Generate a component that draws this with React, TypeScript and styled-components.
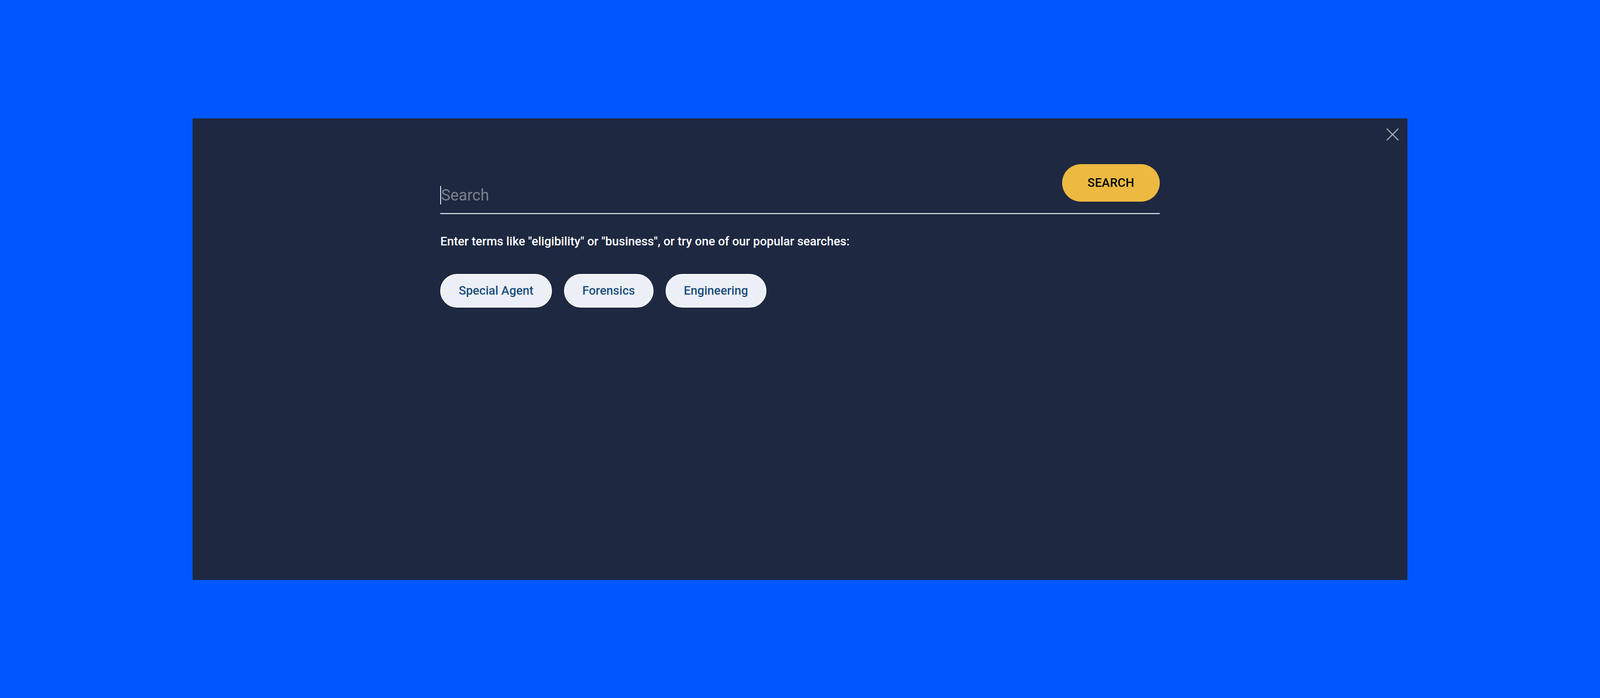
import * as React from "react";
import styled, { createGlobalStyle } from "styled-components";

const GlobalStyle = createGlobalStyle`
  html, body {
    margin: 0;
    padding: 0;
    background: #0057ff;
    font-family: Roboto, "Liberation Sans", Arial, sans-serif;
  }
  * { box-sizing: border-box; }
`;

const popularSearches = ["Special Agent", "Forensics", "Engineering"];

const Page = styled.div`
  min-height: 100vh;
  display: flex;
  align-items: center;
  justify-content: center;
  background: #0057ff;
`;

const Modal = styled.div`
  position: relative;
  width: 75.95%;
  height: 1181px;
  background: #1e2841;
  padding-top: 117px;
`;

const CloseButton = styled.button`
  position: absolute;
  top: 25px;
  right: 22px;
  width: 33px;
  height: 33px;
  padding: 0;
  border: none;
  background: transparent;
  cursor: pointer;
  display: flex;
  align-items: center;
  justify-content: center;
`;

const Content = styled.div`
  width: 59.2%;
  margin: 0 auto;
`;

const SearchRow = styled.form`
  display: flex;
  align-items: flex-start;
  justify-content: space-between;
  border-bottom: 3px solid #c9ced6;
`;

const SearchInput = styled.input`
  flex: 1;
  margin-top: 56px;
  height: 47px;
  padding: 0;
  border: none;
  outline: none;
  background: transparent;
  font-family: Roboto, "Liberation Sans", Arial, sans-serif;
  font-size: 40px;
  color: #ffffff;
  border-left: 2px solid #ffffff;
  &::placeholder {
    color: #7b818c;
  }
`;

const SearchButton = styled.button`
  width: 250px;
  height: 96px;
  margin-bottom: 29px;
  border: none;
  border-radius: 48px;
  background: #edb941;
  color: #000000;
  font-family: Roboto, "Liberation Sans", Arial, sans-serif;
  font-size: 31px;
  font-weight: 500;
  letter-spacing: 0.2px;
  cursor: pointer;
`;

const Hint = styled.p`
  margin: 52px 0 0;
  color: #ffffff;
  font-size: 31px;
  font-weight: 500;
  line-height: 36px;
`;

const ChipList = styled.div`
  display: flex;
  gap: 31px;
  margin-top: 65px;
`;

const Chip = styled.button`
  height: 86px;
  padding: 0 45px;
  border: 2px solid #ffffff;
  border-radius: 43px;
  background: #ecf0f6;
  color: #1d4e7d;
  font-family: Roboto, "Liberation Sans", Arial, sans-serif;
  font-size: 31px;
  font-weight: 500;
  cursor: pointer;
`;

const CloseIcon = () => (
  <svg width="32" height="32" viewBox="0 0 32 32" fill="none">
    <path
      d="M2 2 L30 30 M30 2 L2 30"
      stroke="#a3a9b3"
      strokeWidth="3"
      strokeLinecap="round"
    />
  </svg>
);

export default function App() {
  return (
    <>
      <GlobalStyle />
      <Page>
        <Modal>
          <CloseButton aria-label="Close">
            <CloseIcon />
          </CloseButton>
          <Content>
            <SearchRow onSubmit={(e) => e.preventDefault()}>
              <SearchInput placeholder="Search" />
              <SearchButton type="submit">SEARCH</SearchButton>
            </SearchRow>
            <Hint>
              Enter terms like "eligibility" or "business", or try one of our
              popular searches:
            </Hint>
            <ChipList>
              {popularSearches.map((term) => (
                <Chip key={term}>{term}</Chip>
              ))}
            </ChipList>
          </Content>
        </Modal>
      </Page>
    </>
  );
}
